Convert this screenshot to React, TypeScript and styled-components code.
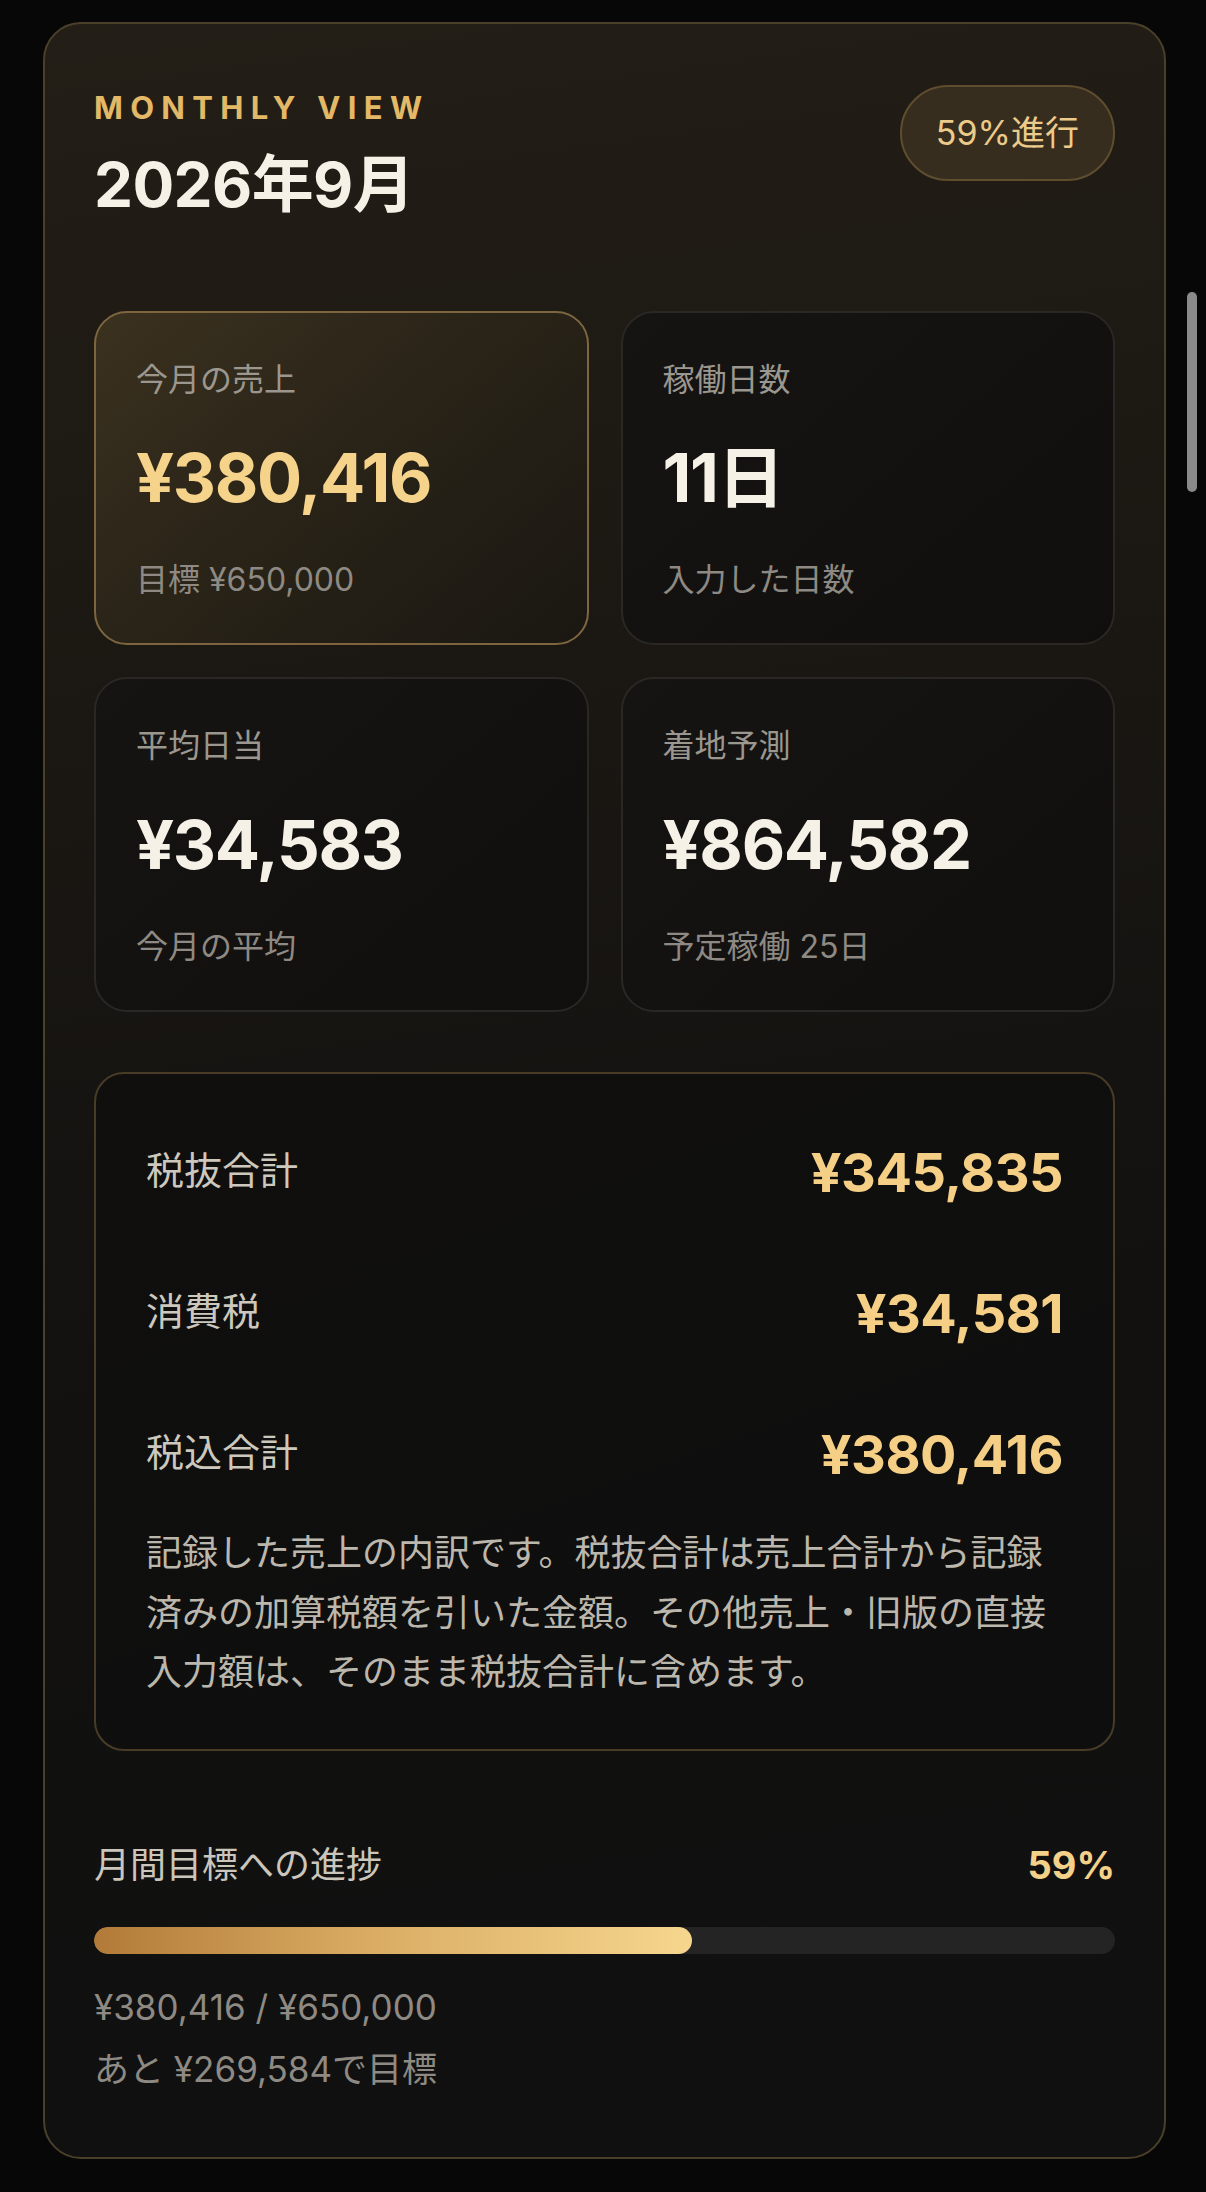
import React from 'react';
import styled, { createGlobalStyle } from 'styled-components';

const GlobalStyle = createGlobalStyle`
	html, body {
		margin: 0;
		padding: 0;
		background: #070707;
	}
	body {
		font-family: Inter, "Noto Sans CJK JP", "Noto Sans", sans-serif;
		-webkit-font-smoothing: antialiased;
	}
	* {
		box-sizing: border-box;
	}
`;

interface HighlightProps {
	$highlight?: boolean;
}

interface StatItem {
	label: string;
	value: string;
	sub: string;
	highlight?: boolean;
}

interface BreakdownItem {
	label: string;
	value: string;
}

const Page = styled.div`
	position: relative;
	padding: 22px 40px 33px 43px;
	min-height: 2192px;
`;

const ScrollThumb = styled.div`
	position: absolute;
	top: 292px;
	right: 9px;
	width: 10px;
	height: 200px;
	border-radius: 5px;
	background: #8a8a8a;
`;

const Panel = styled.section`
	border: 2px solid #4a3f29;
	border-radius: 38px;
	background: linear-gradient(172deg, #231e16 0%, #1b1813 30%, #121110 62%, #101010 100%);
	padding: 61px 49px 57px;
`;

const Header = styled.header`
	display: flex;
	justify-content: space-between;
	align-items: flex-start;
`;

const Eyebrow = styled.div`
	margin-top: 4px;
	font-size: 31px;
	line-height: 1.2;
	font-weight: 700;
	letter-spacing: 0.235em;
	color: #e3b866;
`;

const Title = styled.h1`
	margin: 22px 0 0;
	font-size: 62px;
	line-height: 1.2;
	font-weight: 700;
	letter-spacing: -0.01em;
	color: #f6f1e7;
`;

const Badge = styled.div`
	padding: 27px 34px;
	border: 2px solid #5f4e2e;
	border-radius: 999px;
	background: #372d1e;
	font-size: 34px;
	line-height: 38px;
	color: #eccb8a;
`;

const StatGrid = styled.div`
	display: grid;
	grid-template-columns: 1fr 1fr;
	gap: 32px;
	margin-top: 88px;
`;

const StatCard = styled.div<HighlightProps>`
	border: 2px solid ${({ $highlight }) => ($highlight ? '#7d663f' : '#2a2825')};
	border-radius: 33px;
	background: ${({ $highlight }) =>
		$highlight
			? 'linear-gradient(140deg, #3b311f 0%, #2a2418 45%, #1a1712 100%)'
			: 'linear-gradient(140deg, #151413 0%, #100f0e 100%)'};
	padding: 48px 40px 44px;
`;

const StatLabel = styled.div`
	font-size: 32px;
	line-height: 1.2;
	color: #9b978f;
`;

const StatValue = styled.div<HighlightProps>`
	margin-top: 46px;
	font-size: 67px;
	line-height: 66px;
	font-weight: 700;
	letter-spacing: -0.02em;
	color: ${({ $highlight }) => ($highlight ? '#f6d38b' : '#f6f1e7')};
`;

const StatSub = styled.div`
	margin-top: 50px;
	font-size: 32px;
	line-height: 1.2;
	color: #8e8a83;
`;

const Breakdown = styled.div`
	margin-top: 60px;
	border: 2px solid #483c27;
	border-radius: 30px;
	background: linear-gradient(160deg, #100f0e 0%, #0e0e0e 100%);
	padding: 64px 50px 46px;
`;

const BreakdownRows = styled.div`
	display: flex;
	flex-direction: column;
	gap: 76px;
`;

const Row = styled.div`
	display: flex;
	justify-content: space-between;
	align-items: center;
	height: 65px;
`;

const RowLabel = styled.div`
	font-size: 38px;
	line-height: 1.2;
	color: #cdc8be;
`;

const RowValue = styled.div`
	padding-top: 6px;
	font-size: 54px;
	line-height: 1.2;
	font-weight: 700;
	letter-spacing: -0.01em;
	color: #f4cf85;
`;

const Note = styled.p`
	margin: 39px 0 0;
	font-size: 36px;
	line-height: 59.6px;
	color: #bcb7ad;
`;

const Progress = styled.div`
	margin-top: 92px;
`;

const ProgressHead = styled.div`
	display: flex;
	justify-content: space-between;
	align-items: center;
`;

const ProgressLabel = styled.div`
	font-size: 36px;
	line-height: 1.2;
	color: #cbc6bc;
`;

const ProgressPercent = styled.div`
	font-size: 38px;
	line-height: 1.2;
	font-weight: 700;
	color: #f4d189;
`;

const Track = styled.div`
	margin-top: 38px;
	height: 27px;
	border-radius: 999px;
	background: #242424;
	overflow: hidden;
`;

const Fill = styled.div`
	height: 100%;
	border-radius: 999px;
	background: linear-gradient(90deg, #b27a38 0%, #d9ab62 45%, #f6d68e 100%);
`;

const Foot = styled.div`
	margin-top: 22px;
`;

const FootLine = styled.div`
	font-size: 35px;
	line-height: 62px;
	color: #8e8a83;
`;

const stats: StatItem[] = [
	{ label: '今月の売上', value: '¥380,416', sub: '目標 ¥650,000', highlight: true },
	{ label: '稼働日数', value: '11日', sub: '入力した日数' },
	{ label: '平均日当', value: '¥34,583', sub: '今月の平均' },
	{ label: '着地予測', value: '¥864,582', sub: '予定稼働 25日' },
];

const breakdown: BreakdownItem[] = [
	{ label: '税抜合計', value: '¥345,835' },
	{ label: '消費税', value: '¥34,581' },
	{ label: '税込合計', value: '¥380,416' },
];

const sales = 380416;
const goal = 650000;

export default function App() {
	const ratio = sales / goal;

	return (
		<>
			<GlobalStyle />
			<Page>
				<Panel>
					<Header>
						<div>
							<Eyebrow>MONTHLY VIEW</Eyebrow>
							<Title>2026年9月</Title>
						</div>
						<Badge>59%進行</Badge>
					</Header>

					<StatGrid>
						{stats.map((s) => (
							<StatCard key={s.label} $highlight={s.highlight}>
								<StatLabel>{s.label}</StatLabel>
								<StatValue $highlight={s.highlight}>{s.value}</StatValue>
								<StatSub>{s.sub}</StatSub>
							</StatCard>
						))}
					</StatGrid>

					<Breakdown>
						<BreakdownRows>
							{breakdown.map((b) => (
								<Row key={b.label}>
									<RowLabel>{b.label}</RowLabel>
									<RowValue>{b.value}</RowValue>
								</Row>
							))}
						</BreakdownRows>
						<Note>
							記録した売上の内訳です。税抜合計は売上合計から記録済みの加算税額を引いた金額。その他売上・旧版の直接入力額は、そのまま税抜合計に含めます。
						</Note>
					</Breakdown>

					<Progress>
						<ProgressHead>
							<ProgressLabel>月間目標への進捗</ProgressLabel>
							<ProgressPercent>59%</ProgressPercent>
						</ProgressHead>
						<Track>
							<Fill style={{ width: `${ratio * 100}%` }} />
						</Track>
						<Foot>
							<FootLine>¥380,416 / ¥650,000</FootLine>
							<FootLine>あと ¥269,584で目標</FootLine>
						</Foot>
					</Progress>
				</Panel>
				<ScrollThumb />
			</Page>
		</>
	);
}
